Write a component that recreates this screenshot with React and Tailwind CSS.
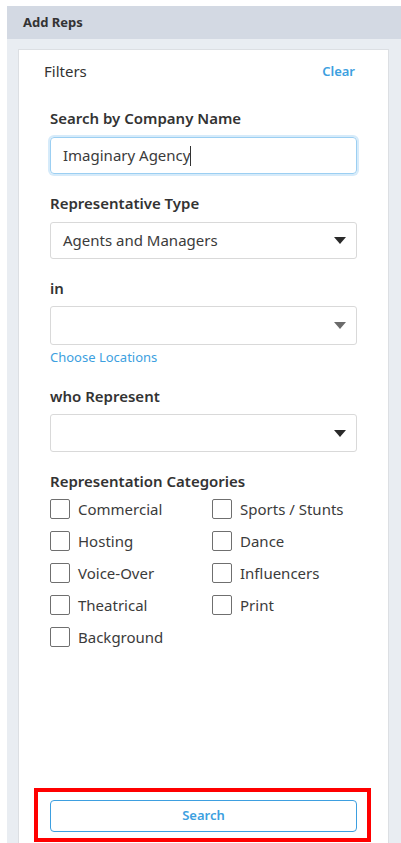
import React from "react";

const font = { fontFamily: '"Noto Sans", "Open Sans", sans-serif' };

function Caret({ light }) {
  return (
    <svg width="12" height="7" viewBox="0 0 12 7" className="shrink-0">
      <path d="M0 0 L12 0 L6 7 Z" fill={light ? "#6b6b6b" : "#2a2a2a"} />
    </svg>
  );
}

function Check({ label }) {
  return (
    <label className="flex items-center h-[32px]">
      <span className="w-[20px] h-[20px] border border-[#6f6f6f] rounded-[2px] bg-white shrink-0" />
      <span className="ml-[8px] text-[15px] text-[#3b3b3b] leading-none">{label}</span>
    </label>
  );
}

export default function App() {
  return (
    <div className="w-[401px] h-[843px] bg-white overflow-hidden relative" style={font}>
      <div className="pt-[6px] pl-[7px] h-full flex flex-col">
        <div className="h-[33px] bg-[#d3d9e3] flex items-center pl-[16px]">
          <span className="text-[13px] font-bold text-[#333]">Add Reps</span>
        </div>
        <div className="flex-1 bg-[#e9edf2] pt-[10px] pl-[11px] pr-[12px]">
          <div className="h-full bg-white border border-[#dcdfe3] border-b-0 flex flex-col">
            <div className="flex items-center justify-between pl-[25px] pr-[33px] pt-[10px] h-[33px]">
              <span className="text-[15px] text-[#333]">Filters</span>
              <span className="text-[13px] font-semibold text-[#3d9fe0]">Clear</span>
            </div>
            <div className="px-[31px] flex flex-col">
              <div className="mt-[25px] text-[15px] font-semibold text-[#333] leading-[20px]">Search by Company Name</div>
              <div className="mt-[9px] h-[37px] border border-[#9ccff2] rounded-[4px] shadow-[0_0_0_2px_#d6ebfa] flex items-center pl-[12px]">
                <span className="text-[15px] text-[#3b3b3b]">Imaginary Agency</span>
                <span className="w-px h-[20px] bg-[#333]" />
              </div>
              <div className="mt-[19px] text-[15px] font-semibold text-[#333] leading-[20px]">Representative Type</div>
              <div className="mt-[9px] h-[37px] border border-[#d9d9d9] rounded-[3px] flex items-center justify-between pl-[12px] pr-[10px]">
                <span className="text-[15px] text-[#3b3b3b]">Agents and Managers</span>
                <Caret />
              </div>
              <div className="mt-[19px] text-[15px] font-semibold text-[#333] leading-[20px]">in</div>
              <div className="mt-[8px] h-[39px] border border-[#d9d9d9] rounded-[3px] flex items-center justify-end pr-[10px]">
                <Caret light />
              </div>
              <div className="mt-[3px] text-[13px] text-[#3d9fe0] leading-[18px]">Choose Locations</div>
              <div className="mt-[20px] text-[15px] font-semibold text-[#333] leading-[20px]">who Represent</div>
              <div className="mt-[8px] h-[38px] border border-[#d9d9d9] rounded-[3px] flex items-center justify-end pr-[10px]">
                <Caret />
              </div>
              <div className="mt-[19px] text-[15px] font-semibold text-[#333] leading-[20px]">Representation Categories</div>
              <div className="mt-[2px] grid grid-cols-[162px_1fr]">
                <div className="flex flex-col">
                  <Check label="Commercial" />
                  <Check label="Hosting" />
                  <Check label="Voice-Over" />
                  <Check label="Theatrical" />
                  <Check label="Background" />
                </div>
                <div className="flex flex-col">
                  <Check label="Sports / Stunts" />
                  <Check label="Dance" />
                  <Check label="Influencers" />
                  <Check label="Print" />
                </div>
              </div>
            </div>
            <div className="flex-1" />
            <div className="px-[31px] pb-[11px]">
              <button className="w-full h-[32px] border border-[#3d9fe0] rounded-[4px] text-[13px] font-semibold text-[#3d9fe0] bg-white">
                Search
              </button>
            </div>
          </div>
        </div>
      </div>
      <div className="absolute left-[34px] top-[788px] w-[337px] h-[54px] border-[4px] border-[#ff0000] pointer-events-none" />
    </div>
  );
}
